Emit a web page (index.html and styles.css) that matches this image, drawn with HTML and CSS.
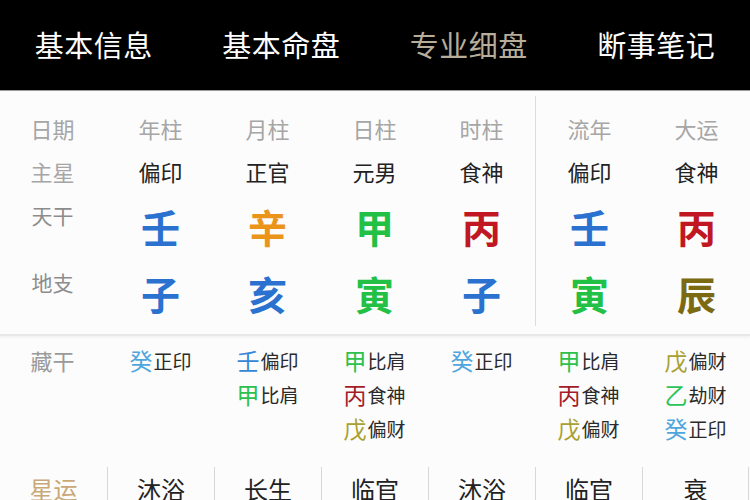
FILE: index.html
```html
<!DOCTYPE html>
<html lang="zh-CN">
<head>
<meta charset="utf-8">
<title>专业细盘</title>
<link rel="stylesheet" href="styles.css">
</head>
<body>
<nav class="tabs">
  <div class="tab">基本信息</div>
  <div class="tab">基本命盘</div>
  <div class="tab active">专业细盘</div>
  <div class="tab">断事笔记</div>
</nav>

<section class="top">
  <div class="grid pillars">
    <div class="lbl">日期</div><div class="head">年柱</div><div class="head">月柱</div><div class="head">日柱</div><div class="head">时柱</div>
    <div class="lbl">主星</div><div class="star">偏印</div><div class="star">正官</div><div class="star">元男</div><div class="star">食神</div>
    <div class="lbl lbl-big">天干</div><div class="big c-blue">壬</div><div class="big c-orange">辛</div><div class="big c-green">甲</div><div class="big c-red">丙</div>
    <div class="lbl lbl-big">地支</div><div class="big c-blue">子</div><div class="big c-blue">亥</div><div class="big c-green">寅</div><div class="big c-blue">子</div>
  </div>
  <div class="grid yun">
    <div class="head">流年</div><div class="head">大运</div>
    <div class="star">偏印</div><div class="star">食神</div>
    <div class="big c-blue">壬</div><div class="big c-red">丙</div>
    <div class="big c-green">寅</div><div class="big c-olive">辰</div>
  </div>
</section>

<section class="hidden">
  <div class="hlbl">藏干</div>
  <div class="hcol"><div class="hs"><span class="s h-gui">癸</span>正印</div></div>
  <div class="hcol"><div class="hs"><span class="s h-ren">壬</span>偏印</div><div class="hs"><span class="s h-jia">甲</span>比肩</div></div>
  <div class="hcol"><div class="hs"><span class="s h-jia">甲</span>比肩</div><div class="hs"><span class="s h-bing">丙</span>食神</div><div class="hs"><span class="s h-wu">戊</span>偏财</div></div>
  <div class="hcol"><div class="hs"><span class="s h-gui">癸</span>正印</div></div>
  <div class="hcol"><div class="hs"><span class="s h-jia">甲</span>比肩</div><div class="hs"><span class="s h-bing">丙</span>食神</div><div class="hs"><span class="s h-wu">戊</span>偏财</div></div>
  <div class="hcol"><div class="hs"><span class="s h-wu">戊</span>偏财</div><div class="hs"><span class="s h-yi">乙</span>劫财</div><div class="hs"><span class="s h-gui">癸</span>正印</div></div>
</section>

<section class="luck">
  <div class="lk lk-lbl">星运</div>
  <div class="lk">沐浴</div>
  <div class="lk">长生</div>
  <div class="lk">临官</div>
  <div class="lk">沐浴</div>
  <div class="lk">临官</div>
  <div class="lk lk-last">衰</div>
</section>
</body>
</html>
```

FILE: styles.css
```css
* { box-sizing: border-box; }
html, body {
  margin: 0;
  padding: 0;
  background: #fcfcfc;
  font-family: "Noto Sans CJK SC", "Noto Sans", sans-serif;
  overflow: hidden;
}
.tabs {
  display: flex;
  height: 91px;
  background: #000;
  border-bottom: 1px solid #9a9a9a;
}
.tab {
  flex: 1;
  display: flex;
  align-items: center;
  justify-content: center;
  color: #fff;
  font-size: 29px;
  padding-bottom: 2px;
  letter-spacing: 0.5px;
}
.tab.active { color: #b7ad9a; }

.top {
  display: flex;
  padding-top: 5px;
  border-bottom: 2px solid #e8e8e8;
  box-shadow: 0 2px 2px rgba(0,0,0,0.04);
}
.grid {
  display: grid;
  grid-template-rows: 44px 42px 67px 67px;
  padding-top: 10px;
}
.pillars {
  width: 535px;
  grid-template-columns: repeat(5, 107px);
}
.yun {
  width: 214px;
  grid-template-columns: repeat(2, 107px);
  border-left: 1px solid #dcdcdc;
  margin-bottom: 8px;
}
.lbl, .head, .star, .big {
  display: flex;
  align-items: center;
  justify-content: center;
}
.lbl, .head {
  color: #a6a6a6;
  font-size: 22px;
}
.lbl { padding-right: 2px; }
.lbl-big {
  align-items: flex-start;
  padding-top: 8px;
  font-size: 21px;
  color: #8c8c8c;
}
.star {
  color: #222;
  font-size: 22px;
}
.big {
  font-size: 39px;
  font-weight: 700;
}
.c-blue { color: #2b72d0; }
.c-orange { color: #ea951a; }
.c-green { color: #22c045; }
.c-red { color: #c01722; }
.c-olive { color: #7c6a12; }

.hidden {
  display: grid;
  grid-template-columns: repeat(7, 107px);
  padding: 7px 0 20px;
}
.hlbl {
  color: #9a9a9a;
  font-size: 22px;
  line-height: 34px;
  text-align: center;
  padding-right: 2px;
}
.hcol {
  display: flex;
  flex-direction: column;
  align-items: center;
}
.hs {
  height: 34px;
  display: flex;
  align-items: center;
  font-size: 19px;
  color: #2a2a2a;
}
.s {
  font-size: 23px;
  margin-right: 1px;
}
.h-gui { color: #4fa6de; }
.h-ren { color: #3587d6; }
.h-jia { color: #2cc04c; }
.h-bing { color: #a41c2a; }
.h-wu { color: #a9a032; }
.h-yi { color: #2cc35a; }

.luck {
  display: grid;
  grid-template-columns: repeat(7, 107px);
}
.lk {
  margin-top: 2px;
  padding-top: 5px;
  height: 40px;
  text-align: center;
  font-size: 24px;
  line-height: 34px;
  color: #222;
  border-left: 1px solid #d8d8d8;
}
.lk-lbl {
  border-left: none;
  color: #c9a877;
}
.lk-last { border-right: 1px solid #d8d8d8; }
```
